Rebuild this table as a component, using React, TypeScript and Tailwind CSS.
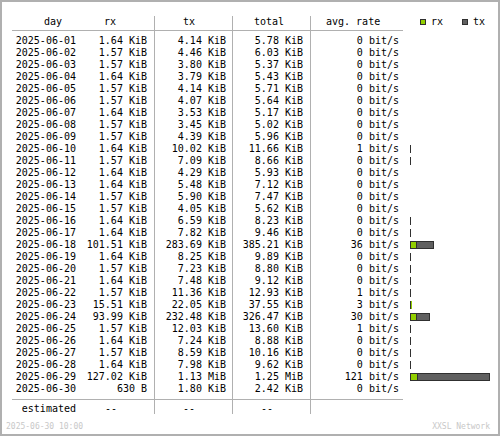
import React from "react";

type Row = [string, string, string, string, string, number, number];

// date, rx, tx, total, avg rate, bar width, rx part of bar
const rows: Row[] = [
  ["2025-06-01", "1.64 KiB", "4.14 KiB", "5.78 KiB", "0 bit/s", 0, 0],
  ["2025-06-02", "1.57 KiB", "4.46 KiB", "6.03 KiB", "0 bit/s", 0, 0],
  ["2025-06-03", "1.57 KiB", "3.80 KiB", "5.37 KiB", "0 bit/s", 0, 0],
  ["2025-06-04", "1.64 KiB", "3.79 KiB", "5.43 KiB", "0 bit/s", 0, 0],
  ["2025-06-05", "1.57 KiB", "4.14 KiB", "5.71 KiB", "0 bit/s", 0, 0],
  ["2025-06-06", "1.57 KiB", "4.07 KiB", "5.64 KiB", "0 bit/s", 0, 0],
  ["2025-06-07", "1.64 KiB", "3.53 KiB", "5.17 KiB", "0 bit/s", 0, 0],
  ["2025-06-08", "1.57 KiB", "3.45 KiB", "5.02 KiB", "0 bit/s", 0, 0],
  ["2025-06-09", "1.57 KiB", "4.39 KiB", "5.96 KiB", "0 bit/s", 0, 0],
  ["2025-06-10", "1.64 KiB", "10.02 KiB", "11.66 KiB", "1 bit/s", 1, 0],
  ["2025-06-11", "1.57 KiB", "7.09 KiB", "8.66 KiB", "0 bit/s", 1, 0],
  ["2025-06-12", "1.64 KiB", "4.29 KiB", "5.93 KiB", "0 bit/s", 0, 0],
  ["2025-06-13", "1.64 KiB", "5.48 KiB", "7.12 KiB", "0 bit/s", 0, 0],
  ["2025-06-14", "1.57 KiB", "5.90 KiB", "7.47 KiB", "0 bit/s", 0, 0],
  ["2025-06-15", "1.57 KiB", "4.05 KiB", "5.62 KiB", "0 bit/s", 0, 0],
  ["2025-06-16", "1.64 KiB", "6.59 KiB", "8.23 KiB", "0 bit/s", 1, 0],
  ["2025-06-17", "1.64 KiB", "7.82 KiB", "9.46 KiB", "0 bit/s", 1, 0],
  ["2025-06-18", "101.51 KiB", "283.69 KiB", "385.21 KiB", "36 bit/s", 24, 5],
  ["2025-06-19", "1.64 KiB", "8.25 KiB", "9.89 KiB", "0 bit/s", 1, 0],
  ["2025-06-20", "1.57 KiB", "7.23 KiB", "8.80 KiB", "0 bit/s", 1, 0],
  ["2025-06-21", "1.64 KiB", "7.48 KiB", "9.12 KiB", "0 bit/s", 1, 0],
  ["2025-06-22", "1.57 KiB", "11.36 KiB", "12.93 KiB", "1 bit/s", 1, 0],
  ["2025-06-23", "15.51 KiB", "22.05 KiB", "37.55 KiB", "3 bit/s", 2, 1],
  ["2025-06-24", "93.99 KiB", "232.48 KiB", "326.47 KiB", "30 bit/s", 20, 5],
  ["2025-06-25", "1.57 KiB", "12.03 KiB", "13.60 KiB", "1 bit/s", 1, 0],
  ["2025-06-26", "1.64 KiB", "7.24 KiB", "8.88 KiB", "0 bit/s", 1, 0],
  ["2025-06-27", "1.57 KiB", "8.59 KiB", "10.16 KiB", "0 bit/s", 1, 0],
  ["2025-06-28", "1.64 KiB", "7.98 KiB", "9.62 KiB", "0 bit/s", 1, 0],
  ["2025-06-29", "127.02 KiB", "1.13 MiB", "1.25 MiB", "121 bit/s", 80, 6],
  ["2025-06-30", "630 B", "1.80 KiB", "2.42 KiB", "0 bit/s", 0, 0],
];

interface barProps {
  w: number;
  g: number;
}

const Bar = ({ w, g }: barProps) => {
  if (w === 0) return null;
  if (w === 1) return <div className="h-[8px] w-px bg-[#303030]" />;
  if (w === 2)
    return <div className="h-[8px] w-[2px] border-l border-[#303030] bg-[#92cf00]" />;
  return (
    <div className="flex h-[8px] border border-[#303030]" style={{ width: w }}>
      <div className="h-full border-r border-[#303030] bg-[#92cf00]" style={{ width: g + 1 }} />
      <div className="h-full flex-1 bg-[#606060]" />
    </div>
  );
};

const line = "border-l border-[#b0b0b0]";

const App = () => {
  return (
    <div className="flex h-[436px] w-[500px] flex-col border-2 border-[#b0b0b0] bg-white font-['DejaVu_Sans_Mono',monospace] text-[10px] leading-[12px] text-black">
      <div className="pl-[10px] pt-[14px]">
        {/* header */}
        <div className="flex h-[15px] w-[391px] border-b border-[#b0b0b0]">
          <div className="w-[68px] pl-[32px]">day</div>
          <div className="w-[74px] pl-[24px]">rx</div>
          <div className={`w-[78px] pl-[28px] ${line}`}>tx</div>
          <div className={`w-[78px] pl-[21px] ${line}`}>total</div>
          <div className={`w-[93px] pl-[15px] ${line}`}>avg. rate</div>
          <div className="-mr-[95px] flex h-[12px] w-[95px] shrink-0 items-center pl-[17px]">
            <div className="h-[6px] w-[6px] border border-[#303030] bg-[#92cf00]" />
            <span className="ml-[5px] w-[12px]">rx</span>
            <div className="ml-[19px] h-[6px] w-[6px] border border-[#303030] bg-[#606060]" />
            <span className="ml-[5px]">tx</span>
          </div>
        </div>

        {/* days */}
        <div className="flex w-[391px] border-b border-[#b0b0b0] text-right">
          <div className="w-[68px] py-[4px] pr-[4px]">
            {rows.map((r) => (
              <div key={r[0]}>{r[0]}</div>
            ))}
          </div>
          <div className="w-[74px] py-[4px] pr-[7px]">
            {rows.map((r) => (
              <div key={r[0]}>{r[1]}</div>
            ))}
          </div>
          <div className={`w-[78px] py-[4px] pr-[6px] ${line}`}>
            {rows.map((r) => (
              <div key={r[0]}>{r[2]}</div>
            ))}
          </div>
          <div className={`w-[78px] py-[4px] pr-[7px] ${line}`}>
            {rows.map((r) => (
              <div key={r[0]}>{r[3]}</div>
            ))}
          </div>
          <div className={`w-[93px] py-[4px] pr-[4px] ${line}`}>
            {rows.map((r) => (
              <div key={r[0]} className="whitespace-pre">
                {r[4]}
              </div>
            ))}
          </div>
          <div className="-mr-[95px] w-[95px] shrink-0 py-[4px] pl-[7px]">
            {rows.map((r) => (
              <div key={r[0]} className="flex h-[12px] items-center">
                <Bar w={r[5]} g={r[6]} />
              </div>
            ))}
          </div>
        </div>

        {/* estimated */}
        <div className="flex h-[14px] w-[391px]">
          <div className="w-[68px] pr-[4px] pt-[3px] text-right">estimated</div>
          <div className="w-[74px] pl-[25px] pt-[3px]">--</div>
          <div className={`w-[78px] pl-[28px] pt-[3px] ${line}`}>--</div>
          <div className={`w-[78px] pl-[28px] pt-[3px] ${line}`}>--</div>
          <div className={`w-[93px] ${line}`} />
        </div>
      </div>

      <div className="mt-[8px] flex justify-between pl-[4px] pr-[8px] text-[8px] leading-[10px] text-[#c8c8c8]">
        <span>2025-06-30 10:00</span>
        <span>XXSL Network</span>
      </div>
    </div>
  );
};

export default App;
